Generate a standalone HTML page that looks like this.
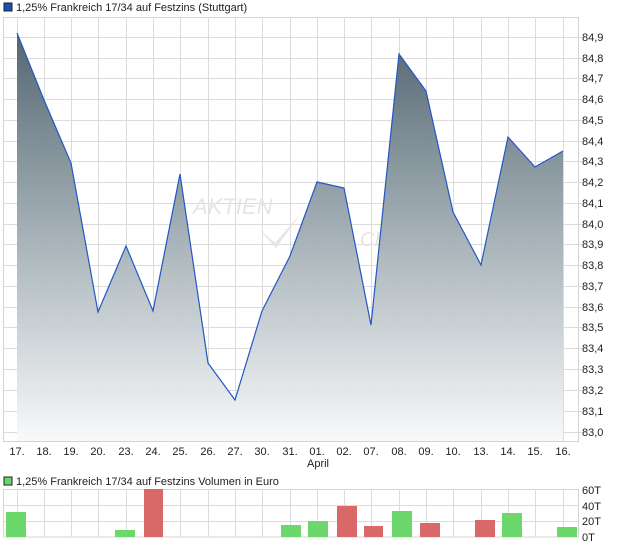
<!DOCTYPE html>
<html><head><meta charset="utf-8"><style>
html,body{margin:0;padding:0;background:#fff;}
body{width:620px;height:546px;overflow:hidden;font-family:"Liberation Sans",sans-serif;}
svg text{font-family:"Liberation Sans",sans-serif;font-size:11px;fill:#222;}
</style></head><body>
<svg width="620" height="546" viewBox="0 0 620 546" xmlns="http://www.w3.org/2000/svg">
<defs>
<linearGradient id="g" gradientUnits="userSpaceOnUse" x1="0" y1="33" x2="0" y2="441">
<stop offset="0" stop-color="#4d606c"/>
<stop offset="0.5" stop-color="#a3afb5"/>
<stop offset="1" stop-color="#f8f9fa"/>
</linearGradient>
</defs>
<rect x="4" y="3" width="8" height="8" fill="#1f4fb0" stroke="#222" stroke-width="1"/>
<text x="16" y="11">1,25% Frankreich 17/34 auf Festzins (Stuttgart)</text>
<g stroke="#dcdcdc" stroke-width="1">
<line x1="17.5" y1="17" x2="17.5" y2="441"/><line x1="44.5" y1="17" x2="44.5" y2="441"/><line x1="71.5" y1="17" x2="71.5" y2="441"/><line x1="98.5" y1="17" x2="98.5" y2="441"/><line x1="126.5" y1="17" x2="126.5" y2="441"/><line x1="153.5" y1="17" x2="153.5" y2="441"/><line x1="180.5" y1="17" x2="180.5" y2="441"/><line x1="208.5" y1="17" x2="208.5" y2="441"/><line x1="235.5" y1="17" x2="235.5" y2="441"/><line x1="262.5" y1="17" x2="262.5" y2="441"/><line x1="290.5" y1="17" x2="290.5" y2="441"/><line x1="317.5" y1="17" x2="317.5" y2="441"/><line x1="344.5" y1="17" x2="344.5" y2="441"/><line x1="371.5" y1="17" x2="371.5" y2="441"/><line x1="399.5" y1="17" x2="399.5" y2="441"/><line x1="426.5" y1="17" x2="426.5" y2="441"/><line x1="453.5" y1="17" x2="453.5" y2="441"/><line x1="481.5" y1="17" x2="481.5" y2="441"/><line x1="508.5" y1="17" x2="508.5" y2="441"/><line x1="535.5" y1="17" x2="535.5" y2="441"/><line x1="563.5" y1="17" x2="563.5" y2="441"/>
</g>
<g stroke="#dcdcdc">
<line x1="3" y1="37.5" x2="584" y2="37.5"/><line x1="3" y1="58.5" x2="584" y2="58.5"/><line x1="3" y1="78.5" x2="584" y2="78.5"/><line x1="3" y1="99.5" x2="584" y2="99.5"/><line x1="3" y1="120.5" x2="584" y2="120.5"/><line x1="3" y1="141.5" x2="584" y2="141.5"/><line x1="3" y1="161.5" x2="584" y2="161.5"/><line x1="3" y1="182.5" x2="584" y2="182.5"/><line x1="3" y1="203.5" x2="584" y2="203.5"/><line x1="3" y1="224.5" x2="584" y2="224.5"/><line x1="3" y1="244.5" x2="584" y2="244.5"/><line x1="3" y1="265.5" x2="584" y2="265.5"/><line x1="3" y1="286.5" x2="584" y2="286.5"/><line x1="3" y1="307.5" x2="584" y2="307.5"/><line x1="3" y1="327.5" x2="584" y2="327.5"/><line x1="3" y1="348.5" x2="584" y2="348.5"/><line x1="3" y1="369.5" x2="584" y2="369.5"/><line x1="3" y1="390.5" x2="584" y2="390.5"/><line x1="3" y1="411.5" x2="584" y2="411.5"/><line x1="3" y1="432.5" x2="584" y2="432.5"/>
</g>
<text x="193" y="214" style="font-size:22px;font-style:italic;fill:#e8e4df">AKTIEN</text>
<path d="M258 228 L275 243 L302 212 L276 248 Z" fill="#e8e4df"/>
<text x="360" y="246" style="font-size:20px;font-style:italic;fill:#e8e4df">CH</text>
<path d="M17 33 L44 100 L71 163 L98 312 L126 246 L153 311 L180 174 L208 363 L235 400 L262 311 L290 256 L317 182 L344 188 L371 325 L399 54 L426 91 L453 212 L481 265 L508 137 L535 167 L563 151 L563 441 L17 441 Z" fill="url(#g)" fill-opacity="0.96"/>
<polyline points="17,33 44,100 71,163 98,312 126,246 153,311 180,174 208,363 235,400 262,311 290,256 317,182 344,188 371,325 399,54 426,91 453,212 481,265 508,137 535,167 563,151" fill="none" stroke="#2257c4" stroke-width="1.2"/>
<rect x="3.5" y="17.5" width="575" height="424" fill="none" stroke="#d4d4d4"/>
<g>
<text x="582" y="41">84,9</text><text x="582" y="62">84,8</text><text x="582" y="82">84,7</text><text x="582" y="103">84,6</text><text x="582" y="124">84,5</text><text x="582" y="145">84,4</text><text x="582" y="165">84,3</text><text x="582" y="186">84,2</text><text x="582" y="207">84,1</text><text x="582" y="228">84,0</text><text x="582" y="248">83,9</text><text x="582" y="269">83,8</text><text x="582" y="290">83,7</text><text x="582" y="311">83,6</text><text x="582" y="331">83,5</text><text x="582" y="352">83,4</text><text x="582" y="373">83,3</text><text x="582" y="394">83,2</text><text x="582" y="415">83,1</text><text x="582" y="436">83,0</text>
</g>
<g text-anchor="middle">
<text x="17" y="455">17.</text><text x="44" y="455">18.</text><text x="71" y="455">19.</text><text x="98" y="455">20.</text><text x="126" y="455">23.</text><text x="153" y="455">24.</text><text x="180" y="455">25.</text><text x="208" y="455">26.</text><text x="235" y="455">27.</text><text x="262" y="455">30.</text><text x="290" y="455">31.</text><text x="317" y="455">01.</text><text x="344" y="455">02.</text><text x="371" y="455">07.</text><text x="399" y="455">08.</text><text x="426" y="455">09.</text><text x="453" y="455">10.</text><text x="481" y="455">13.</text><text x="508" y="455">14.</text><text x="535" y="455">15.</text><text x="563" y="455">16.</text>
<text x="318" y="467">April</text>
</g>
<rect x="4" y="477" width="8" height="8" fill="#6cd86c" stroke="#222"/>
<text x="16" y="485">1,25% Frankreich 17/34 auf Festzins Volumen in Euro</text>
<g stroke="#dcdcdc">
<line x1="17.5" y1="489" x2="17.5" y2="537"/><line x1="44.5" y1="489" x2="44.5" y2="537"/><line x1="71.5" y1="489" x2="71.5" y2="537"/><line x1="98.5" y1="489" x2="98.5" y2="537"/><line x1="126.5" y1="489" x2="126.5" y2="537"/><line x1="153.5" y1="489" x2="153.5" y2="537"/><line x1="180.5" y1="489" x2="180.5" y2="537"/><line x1="208.5" y1="489" x2="208.5" y2="537"/><line x1="235.5" y1="489" x2="235.5" y2="537"/><line x1="262.5" y1="489" x2="262.5" y2="537"/><line x1="290.5" y1="489" x2="290.5" y2="537"/><line x1="317.5" y1="489" x2="317.5" y2="537"/><line x1="344.5" y1="489" x2="344.5" y2="537"/><line x1="371.5" y1="489" x2="371.5" y2="537"/><line x1="399.5" y1="489" x2="399.5" y2="537"/><line x1="426.5" y1="489" x2="426.5" y2="537"/><line x1="453.5" y1="489" x2="453.5" y2="537"/><line x1="481.5" y1="489" x2="481.5" y2="537"/><line x1="508.5" y1="489" x2="508.5" y2="537"/><line x1="535.5" y1="489" x2="535.5" y2="537"/><line x1="563.5" y1="489" x2="563.5" y2="537"/>
<line x1="3" y1="505.5" x2="578" y2="505.5"/><line x1="3" y1="521.5" x2="578" y2="521.5"/>
</g>
<rect x="3.5" y="489.5" width="575" height="47.5" fill="none" stroke="#d4d4d4"/>
<g fill="#6cd86c">
<rect x="6" y="512" width="20" height="25"/><rect x="115" y="530" width="20" height="7"/><rect x="281" y="525" width="20" height="12"/><rect x="308" y="521" width="20" height="16"/><rect x="392" y="511" width="20" height="26"/><rect x="502" y="513" width="20" height="24"/><rect x="557" y="527" width="20" height="10"/>
</g>
<g fill="#d96868">
<rect x="144" y="489" width="19" height="48"/><rect x="337" y="506" width="20" height="31"/><rect x="364" y="526" width="19" height="11"/><rect x="420" y="523" width="20" height="14"/><rect x="475" y="520" width="20" height="17"/>
</g>
<text x="582" y="494">60T</text><text x="582" y="510">40T</text><text x="582" y="525">20T</text><text x="582" y="541">0T</text>
</svg>
</body></html>
